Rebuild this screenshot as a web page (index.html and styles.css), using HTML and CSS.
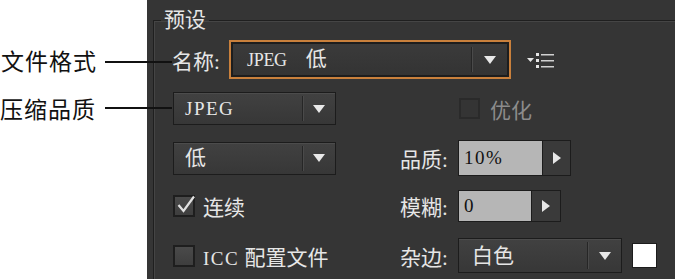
FILE: index.html
```html
<!DOCTYPE html>
<html lang="zh">
<head>
<meta charset="utf-8">
<link rel="stylesheet" href="styles.css">
</head>
<body>
<div class="annot">
  <div class="note n1">文件格式</div>
  <div class="note n2">压缩品质</div>
</div>
<div class="panel">
  <fieldset class="group">
    <legend>预设</legend>
    <div class="row r1">
      <span class="lbl lbl-name">名称:</span>
      <div class="dd dd-name"><span class="dd-text"><span class="en en-name">JPEG</span>低</span><span class="dd-btn"><i class="tri"></i></span></div>
      <svg class="menu" width="30" height="18" viewBox="0 0 30 18">
        <path d="M1 7 L8 7 L4.5 11 Z" fill="#e6e6e6"/>
        <rect x="10" y="2" width="3" height="3" fill="#e6e6e6"/>
        <rect x="10" y="8" width="3" height="3" fill="#e6e6e6"/>
        <rect x="10" y="14" width="3" height="3" fill="#e6e6e6"/>
        <rect x="15" y="3" width="13" height="1.5" fill="#d0d0d0"/>
        <rect x="15" y="9" width="13" height="1.5" fill="#d0d0d0"/>
        <rect x="15" y="15" width="13" height="1.5" fill="#d0d0d0"/>
      </svg>
    </div>
    <div class="row r2">
      <div class="col-left">
        <div class="dd dd-small"><span class="dd-text"><span class="en">JPEG</span></span><span class="dd-btn"><i class="tri"></i></span></div>
      </div>
      <div class="col-right opt">
        <span class="cb cb-off"></span><span class="cb-text dim">优化</span>
      </div>
    </div>
    <div class="row r3">
      <div class="col-left">
        <div class="dd dd-small"><span class="dd-text">低</span><span class="dd-btn"><i class="tri"></i></span></div>
      </div>
      <div class="col-right">
        <span class="lbl">品质:</span>
        <div class="num num-q"><span class="en">10%</span></div>
        <div class="step step-q"><i class="rtri"></i></div>
      </div>
    </div>
    <div class="row r4">
      <div class="col-left">
        <span class="cb"><svg width="20" height="20" viewBox="0 0 20 20"><path d="M2.5 10 L7.5 16 L18 1.5" fill="none" stroke="#e2e2e2" stroke-width="2.2"/></svg></span><span class="cb-text">连续</span>
      </div>
      <div class="col-right">
        <span class="lbl">模糊:</span>
        <div class="num num-b"><span class="en">0</span></div>
        <div class="step step-b"><i class="rtri"></i></div>
      </div>
    </div>
    <div class="row r5">
      <div class="col-left">
        <span class="cb"></span><span class="cb-text"><span class="en">ICC</span> 配置文件</span>
      </div>
      <div class="col-right">
        <span class="lbl">杂边:</span>
        <div class="dd dd-matte"><span class="dd-text">白色</span><span class="dd-btn"><i class="tri"></i></span></div>
        <span class="swatch"></span>
      </div>
    </div>
  </fieldset>
</div>
</body>
</html>
```
FILE: styles.css
```css
html, body {
  margin: 0;
  padding: 0;
}
body {
  width: 675px;
  height: 279px;
  overflow: hidden;
  display: flex;
  background: #ffffff;
  position: relative;
}
.annot {
  width: 147px;
  flex-shrink: 0;
  padding-top: 47px;
  box-sizing: border-box;
  font-family: "Noto Sans CJK SC", sans-serif;
  font-size: 23px;
  line-height: 26px;
  color: #111;
}
.note {
  position: relative;
  padding-left: 1px;
  letter-spacing: 1px;
}
.note.n2 {
  margin-top: 22px;
  margin-left: -1px;
}
.note::after {
  content: "";
  position: absolute;
  left: 105px;
  top: 14px;
  width: 67px;
  height: 2px;
  background: #111;
  z-index: 5;
}
.note.n2::after {
  left: 106px;
  top: 12px;
}
.panel {
  flex: 1;
  background: #353535;
  overflow: hidden;
  font-family: "Liberation Serif", "Noto Sans CJK SC", serif;
  font-size: 21px;
  color: #e6e6e6;
}
.en {
  font-size: 19px;
  letter-spacing: 1.5px;
}
.en-name {
  font-size: 18px;
  letter-spacing: -0.3px;
  margin-right: 19px;
}
.group {
  margin: 8px -40px 0 6px;
  padding: 8px 0 40px 19px;
  border: 1px solid #1f1f1f;
  box-shadow: inset 1px 1px 0 #454545;
  min-width: 0;
}
.group legend {
  margin-left: -12px;
  padding: 0 3px;
  line-height: 24px;
  font-size: 21px;
}
.row {
  display: flex;
  align-items: center;
}
.r1 { height: 39px; margin-left: -1px; }
.r2 { height: 33px; margin-top: 13px; }
.r3 { height: 36px; margin-top: 15px; }
.r4 { height: 32px; margin-top: 14px; }
.r5 { height: 35px; margin-top: 16px; }
.col-left {
  width: 227px;
  display: flex;
  align-items: center;
}
.col-right {
  display: flex;
  align-items: center;
}
.col-right.opt {
  padding-left: 59px;
}
.lbl {
  width: 58px;
  flex-shrink: 0;
  white-space: nowrap;
}
.lbl-name {
  width: 57px;
}
.dd {
  display: flex;
  align-items: stretch;
  box-sizing: border-box;
  border: 1px solid #1c1c1c;
  background: linear-gradient(#414141, #373737);
  box-shadow: inset 0 1px 0 #4c4c4c;
}
.dd-text {
  flex: 1;
  display: block;
  align-self: center;
  white-space: nowrap;
  line-height: 24px;
}
.dd-btn {
  display: flex;
  align-items: center;
  justify-content: center;
  border-left: 1px solid #262626;
  box-shadow: inset 1px 0 0 #4a4a4a;
}
.tri {
  width: 0;
  height: 0;
  border-left: 6px solid transparent;
  border-right: 6px solid transparent;
  border-top: 8px solid #e8e8e8;
}
.dd-name {
  width: 282px;
  height: 39px;
  border: 2px solid #c9803c;
  box-shadow: inset 0 0 0 2px #1d1d1d;
  background: linear-gradient(#3b3b3b, #333333);
}
.dd-name .dd-text { padding-left: 16px; }
.dd-name .dd-btn { width: 35px; margin: 5px 2px 5px 0; }
.menu {
  margin-left: 15px;
}
.dd-small {
  width: 163px;
  height: 33px;
}
.dd-small .dd-text { padding-left: 11px; }
.dd-small .dd-btn { width: 32px; margin: 3px 0; }
.dd-matte {
  width: 164px;
  height: 35px;
}
.dd-matte .dd-text { padding-left: 13px; }
.dd-matte .dd-btn { width: 33px; margin: 3px 0; }
.cb {
  width: 22px;
  height: 22px;
  box-sizing: border-box;
  border: 2px solid #1e1e1e;
  background: linear-gradient(#4a4a4a, #3e3e3e);
  display: flex;
  align-items: flex-end;
  justify-content: center;
  flex-shrink: 0;
}
.cb svg {
  margin-top: -6px;
  margin-left: 4px;
  overflow: visible;
}
.cb-off {
  border-color: #2a2a2a;
  background: #343434;
  width: 21px;
  height: 21px;
}
.cb-text {
  margin-left: 8px;
  white-space: nowrap;
}
.opt .cb-text {
  margin-left: 10px;
}
.dim {
  color: #8c8c8c;
}
.num {
  box-sizing: border-box;
  border: 1px solid #1c1c1c;
  background: #b6b6b6;
  color: #111;
  display: flex;
  align-items: center;
  padding-left: 5px;
}
.num-q { width: 85px; height: 36px; }
.num-b { width: 74px; height: 32px; }
.step {
  width: 28px;
  box-sizing: border-box;
  border: 1px solid #1c1c1c;
  border-left: none;
  background: #3a3a3a;
  display: flex;
  align-items: center;
  justify-content: center;
}
.step-q { height: 36px; }
.step-b { height: 32px; width: 29px; }
.rtri {
  width: 0;
  height: 0;
  border-top: 6px solid transparent;
  border-bottom: 6px solid transparent;
  border-left: 8px solid #e8e8e8;
}
.swatch {
  width: 25px;
  height: 25px;
  box-sizing: border-box;
  margin-left: 10px;
  background: #ffffff;
  border: 1px solid #1c1c1c;
}
```
